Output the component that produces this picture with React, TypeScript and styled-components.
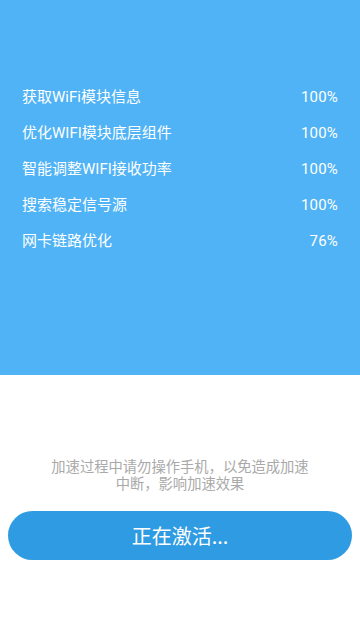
import styled, { createGlobalStyle } from "styled-components";

const GlobalStyle = createGlobalStyle`
  html, body {
    margin: 0;
    padding: 0;
    background: #ffffff;
  }
  body {
    font-family: Roboto, "Noto Sans CJK SC", sans-serif;
  }
`;

const Page = styled.div`
  width: 360px;
  height: 640px;
  display: flex;
  flex-direction: column;
  background: #ffffff;
  overflow: hidden;
`;

const Header = styled.section`
  height: 375px;
  flex: none;
  background: #4fb3f6;
  padding: 79px 22px 0 22px;
  box-sizing: border-box;
  display: flex;
  flex-direction: column;
`;

const Row = styled.div`
  height: 36px;
  line-height: 36px;
  display: flex;
  align-items: baseline;
  justify-content: space-between;
  color: #ffffff;
  font-size: 15px;
`;

const Label = styled.span`
  font-family: Roboto, "Noto Sans CJK SC", sans-serif;
`;

const Percent = styled.span`
  font-family: Roboto, sans-serif;
  letter-spacing: 0.2px;
`;

const Bottom = styled.section`
  flex: 1;
  display: flex;
  flex-direction: column;
  align-items: center;
  padding-top: 82px;
`;

const Notice = styled.p`
  margin: 0;
  width: 264px;
  text-align: center;
  color: #a9a9a9;
  font-size: 14.3px;
  line-height: 17px;
  font-family: "Noto Sans CJK SC", sans-serif;
`;

const ActionButton = styled.button`
  margin-top: 20px;
  width: 344px;
  height: 49px;
  border: none;
  border-radius: 25px;
  background: #2f9be3;
  color: #ffffff;
  font-size: 20px;
  font-family: "Noto Sans CJK SC", sans-serif;
  display: flex;
  align-items: center;
  justify-content: center;
  padding: 0;
`;

const steps = [
  { label: "获取WiFi模块信息", value: "100%" },
  { label: "优化WIFI模块底层组件", value: "100%" },
  { label: "智能调整WIFI接收功率", value: "100%" },
  { label: "搜索稳定信号源", value: "100%" },
  { label: "网卡链路优化", value: "76%" },
];

export default function App() {
  return (
    <>
      <GlobalStyle />
      <Page>
        <Header>
          {steps.map((s) => (
            <Row key={s.label}>
              <Label>{s.label}</Label>
              <Percent>{s.value}</Percent>
            </Row>
          ))}
        </Header>
        <Bottom>
          <Notice>加速过程中请勿操作手机，以免造成加速中断，影响加速效果</Notice>
          <ActionButton>正在激活...</ActionButton>
        </Bottom>
      </Page>
    </>
  );
}
